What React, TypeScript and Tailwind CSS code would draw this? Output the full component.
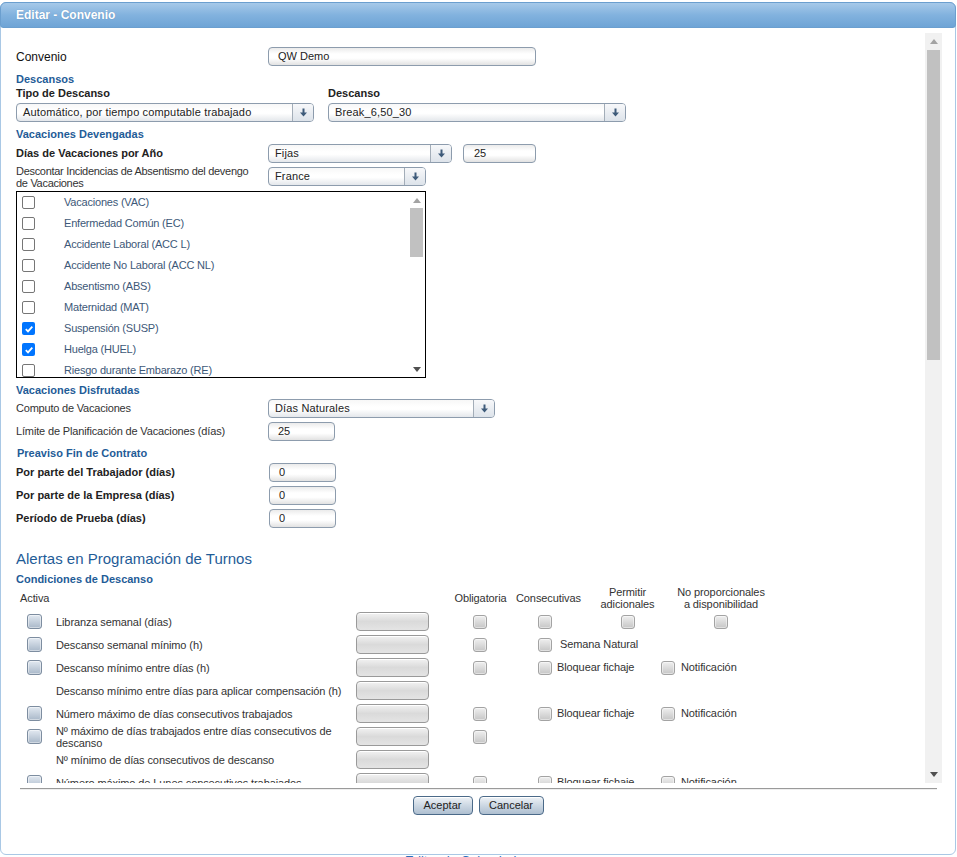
import React from "react";

function DownArrow() {
  return (
    <svg width="9" height="9" viewBox="0 0 9 9">
      <path d="M3.5 0.5h2v4h2.5L4.5 8.5 1 4.5h2.5z" fill="currentColor" />
    </svg>
  );
}

function Tri({ up, color }: { up?: boolean; color: string }) {
  return (
    <svg width="8" height="5" viewBox="0 0 8 5">
      <path d={up ? "M0 5 L4 0 L8 5z" : "M0 0 L8 0 L4 5z"} fill={color} />
    </svg>
  );
}

function Select({ className, text }: { className: string; text: string }) {
  return (
    <div
      className={
        "flex h-[19px] rounded-[4px] border border-[#8d9cad] bg-[linear-gradient(#f7f7f7,#fff_40%,#fff_55%,#e4e7eb)] overflow-hidden " +
        className
      }
    >
      <div className="flex-1 pl-[6px] text-[11px] leading-[17px] tracking-[0.15px] text-[#222] whitespace-nowrap overflow-hidden">{text}</div>
      <div className="w-[21px] border-l border-[#a3adb8] bg-[linear-gradient(#f7f8fa,#dde3ea)] flex items-center justify-center text-[#3e5b7a]">
        <DownArrow />
      </div>
    </div>
  );
}

function TextInput({ className, value }: { className: string; value: string }) {
  return (
    <div
      className={
        "h-[19px] rounded-[4px] border border-[#8d9cad] bg-[linear-gradient(#ebebeb,#fff_35%,#fff_60%,#e2e2e2)] text-[11px] leading-[17px] text-[#222] " +
        className
      }
    >
      {value}
    </div>
  );
}

function GrayInput() {
  return (
    <div className="w-[73px] h-[19px] rounded-[4px] border border-[#9a9a9a] bg-[linear-gradient(#f2f2f2,#dadada_50%,#e4e4e4)] shadow-[inset_0_1px_0_#fff]" />
  );
}

function ListCheck({ checked }: { checked?: boolean }) {
  return checked ? (
    <div className="w-[13px] h-[13px] rounded-[2px] bg-[#0075ff] flex items-center justify-center">
      <svg width="10" height="10" viewBox="0 0 10 10">
        <path d="M1.8 5.2 4 7.4 8.3 2.6" stroke="white" strokeWidth="1.8" fill="none" />
      </svg>
    </div>
  ) : (
    <div className="w-[13px] h-[13px] rounded-[2px] border border-[#767676] bg-white" />
  );
}

function ACheck({ blue }: { blue?: boolean }) {
  return blue ? (
    <div className="w-[15px] h-[15px] rounded-[3px] border border-[#7d8da0] bg-[linear-gradient(#e2e9f1,#a9b8c9)] shadow-[inset_0_0_0_1px_rgba(255,255,255,0.45)]" />
  ) : (
    <div className="w-[14px] h-[14px] rounded-[3px] border border-[#a3a3a3] bg-[linear-gradient(#efefef,#c6c6c6)] shadow-[inset_0_0_0_1px_rgba(255,255,255,0.45)]" />
  );
}

const listItems: [string, boolean][] = [
  ["Vacaciones (VAC)", false],
  ["Enfermedad Común (EC)", false],
  ["Accidente Laboral (ACC L)", false],
  ["Accidente No Laboral (ACC NL)", false],
  ["Absentismo (ABS)", false],
  ["Maternidad (MAT)", false],
  ["Suspensión (SUSP)", true],
  ["Huelga (HUEL)", true],
  ["Riesgo durante Embarazo (RE)", false],
];

function BloqNotif() {
  return (
    <>
      <div className="w-[123px] flex items-center gap-[5px]">
        <ACheck />
        <span>Bloquear fichaje</span>
      </div>
      <div className="flex items-center gap-[6px]">
        <ACheck />
        <span>Notificación</span>
      </div>
    </>
  );
}

function ARow({
  active,
  label,
  oblig,
  rest,
  first,
}: {
  active?: boolean;
  label: React.ReactNode;
  oblig?: boolean;
  rest?: React.ReactNode;
  first?: boolean;
}) {
  return (
    <div className={"flex items-center h-[19px] text-[11px] tracking-[-0.1px] text-[#333] " + (first ? "mt-[2px]" : "mt-[4px]")}>
      <div className="w-[40px] pl-[11px]">{active ? <ACheck blue /> : null}</div>
      <div className="w-[300px] leading-[12px] whitespace-nowrap">{label}</div>
      <GrayInput />
      <div className="w-[109px] pl-[44px]">{oblig ? <ACheck /> : null}</div>
      {rest}
    </div>
  );
}

const H = "text-[11px] leading-[12px] h-[12px] font-bold text-[#1f5c97]";

export default function App() {
  return (
    <div className="relative w-[957px] h-[857px] overflow-hidden bg-white font-['Liberation_Sans',Arial,sans-serif]">
      <div className="absolute left-[405px] top-[851px] text-[13px] text-[#2a6ebb] whitespace-nowrap">Editar de Calendario</div>
      <div className="relative mt-[2px] w-[956px] h-[853px] border border-[#a9c8e5] rounded-[6px] bg-white flex flex-col">
        <div className="-mx-px -mt-px h-[26px] rounded-t-[6px] rounded-b-[3px] border border-[#6b9fcf] bg-[linear-gradient(#a6c9e9,#82b2de_50%,#6ea4d6)] flex items-center pl-[15px] text-[12px] font-bold text-white [text-shadow:0_0_1px_rgba(40,80,130,0.4)]">
          Editar - Convenio
        </div>

        <div className="mt-[5px] flex h-[750px]">
          <div className="flex-1 overflow-hidden pl-[15px] pt-[14px] flex flex-col">
            {/* Convenio */}
            <div className="flex items-center h-[19px]">
              <div className="w-[252px] text-[12px] text-[#111]">Convenio</div>
              <TextInput className="w-[268px] pl-[9px]" value="QW Demo" />
            </div>

            <div className={"mt-[7px] " + H}>Descansos</div>
            <div className="mt-[2px] flex gap-[14px]">
              <div className="w-[298px] flex flex-col">
                <div className="h-[12px] leading-[12px] text-[11px] font-bold text-[#222]">Tipo de Descanso</div>
                <Select className="mt-[4px] w-[298px]" text="Automático, por tiempo computable trabajado" />
              </div>
              <div className="w-[298px] flex flex-col">
                <div className="h-[12px] leading-[12px] text-[11px] font-bold text-[#222]">Descanso</div>
                <Select className="mt-[4px] w-[298px]" text="Break_6,50_30" />
              </div>
            </div>

            <div className={"mt-[6px] " + H}>Vacaciones Devengadas</div>
            <div className="mt-[4px] flex items-center h-[19px]">
              <div className="w-[252px] text-[11px] font-bold text-[#222] whitespace-nowrap">Días de Vacaciones por Año</div>
              <Select className="w-[184px]" text="Fijas" />
              <TextInput className="ml-[11px] w-[73px] pl-[10px]" value="25" />
            </div>
            <div className="mt-[4px] flex items-center h-[19px]">
              <div className="w-[252px] text-[11px] leading-[12px] tracking-[-0.3px] text-[#333] whitespace-nowrap">
                Descontar Incidencias de Absentismo del devengo
                <br />
                de Vacaciones
              </div>
              <Select className="w-[158px]" text="France" />
            </div>

            {/* list box */}
            <div className="mt-[5px] w-[410px] h-[187px] border border-black flex">
              <div className="flex-1 overflow-hidden flex flex-col">
                {listItems.map(([t, c]) => (
                  <div key={t} className="shrink-0 h-[21px] flex items-center">
                    <div className="w-[47px] pl-[5px]">
                      <ListCheck checked={c} />
                    </div>
                    <span className="text-[11px] tracking-[-0.2px] text-[#3d5878] whitespace-nowrap">{t}</span>
                  </div>
                ))}
              </div>
              <div className="w-[15px] mr-[1px] flex flex-col items-stretch">
                <div className="h-[16px] flex items-center justify-center">
                  <Tri up color="#a3a3a3" />
                </div>
                <div className="h-[49px] mx-[1px] bg-[#c1c1c1]" />
                <div className="flex-1" />
                <div className="h-[16px] flex items-center justify-center">
                  <Tri color="#505050" />
                </div>
              </div>
            </div>

            <div className={"mt-[6px] " + H}>Vacaciones Disfrutadas</div>
            <div className="mt-[3px] flex items-center h-[19px]">
              <div className="w-[252px] text-[11px] tracking-[-0.2px] text-[#333]">Computo de Vacaciones</div>
              <Select className="w-[227px]" text="Días Naturales" />
            </div>
            <div className="mt-[4px] flex items-center h-[19px]">
              <div className="w-[252px] text-[11px] tracking-[-0.15px] text-[#333] whitespace-nowrap">Límite de Planificación de Vacaciones (días)</div>
              <TextInput className="w-[67px] pl-[9px]" value="25" />
            </div>

            <div className={"mt-[6px] pl-[1px] " + H}>Preaviso Fin de Contrato</div>
            {["Por parte del Trabajador (días)", "Por parte de la Empresa (días)", "Período de Prueba (días)"].map((l) => (
              <div key={l} className="mt-[4px] flex items-center h-[19px]">
                <div className="w-[253px] text-[11px] font-bold text-[#222] whitespace-nowrap">{l}</div>
                <TextInput className="w-[67px] pl-[9px]" value="0" />
              </div>
            ))}

            <div className="mt-[22px] h-[18px] leading-[18px] text-[15px] text-[#1f5c97]">Alertas en Programación de Turnos</div>
            <div className={"mt-[5px] " + H}>Condiciones de Descanso</div>

            <div className="mt-[1px] h-[24px] flex items-center text-[11px] leading-[12px] tracking-[-0.1px] text-[#333]">
              <div className="w-[429px] pl-[4px]">Activa</div>
              <div className="w-[71px] text-center">Obligatoria</div>
              <div className="w-[64px] text-center">Consecutivas</div>
              <div className="w-[95px] text-center">
                Permitir
                <br />
                adicionales
              </div>
              <div className="w-[92px] text-center whitespace-nowrap">
                No proporcionales
                <br />a disponibilidad
              </div>
            </div>

            <ARow
              first
              active
              oblig
              label="Libranza semanal (días)"
              rest={
                <>
                  <div className="w-[83px]">
                    <ACheck />
                  </div>
                  <div className="w-[93px]">
                    <ACheck />
                  </div>
                  <ACheck />
                </>
              }
            />
            <ARow
              active
              oblig
              label="Descanso semanal mínimo (h)"
              rest={
                <div className="flex items-center gap-[8px]">
                  <ACheck />
                  <span>Semana Natural</span>
                </div>
              }
            />
            <ARow active oblig label="Descanso mínimo entre días (h)" rest={<BloqNotif />} />
            <ARow label="Descanso mínimo entre días para aplicar compensación (h)" />
            <ARow active oblig label="Número máximo de días consecutivos trabajados" rest={<BloqNotif />} />
            <ARow
              active
              oblig
              label={
                <>
                  Nº máximo de días trabajados entre días consecutivos de
                  <br />
                  descanso
                </>
              }
            />
            <ARow label="Nº mínimo de días consecutivos de descanso" />
            <ARow active oblig label="Número máximo de Lunes consecutivos trabajados" rest={<BloqNotif />} />
            <ARow active oblig label="Número máximo de Martes consecutivos trabajados" rest={<BloqNotif />} />
          </div>

          {/* main scrollbar */}
          <div className="w-[17px] mr-[13px] bg-[#f1f1f1] flex flex-col">
            <div className="h-[17px] flex items-center justify-center">
              <Tri up color="#a3a3a3" />
            </div>
            <div className="h-[310px] mx-[2px] bg-[#c1c1c1]" />
            <div className="flex-1" />
            <div className="h-[17px] flex items-center justify-center">
              <Tri color="#505050" />
            </div>
          </div>
        </div>

        <div className="mt-[5px] ml-[19px] mr-[18px] h-[2px] border-t border-[#9a9a9a] bg-[#eeeeee]" />

        <div className="mt-[6px] flex justify-center gap-[6px]">
          <div className="w-[60px] h-[19px] rounded-[4px] border border-[#4b6a89] bg-[linear-gradient(#eef2f6,#c9d5e1_55%,#aebfd0)] shadow-[inset_0_1px_0_#fff] text-[11px] leading-[17px] text-center text-[#222]">
            Aceptar
          </div>
          <div className="w-[65px] h-[19px] rounded-[4px] border border-[#4b6a89] bg-[linear-gradient(#eef2f6,#c9d5e1_55%,#aebfd0)] shadow-[inset_0_1px_0_#fff] text-[11px] leading-[17px] text-center text-[#222]">
            Cancelar
          </div>
        </div>
      </div>
    </div>
  );
}
